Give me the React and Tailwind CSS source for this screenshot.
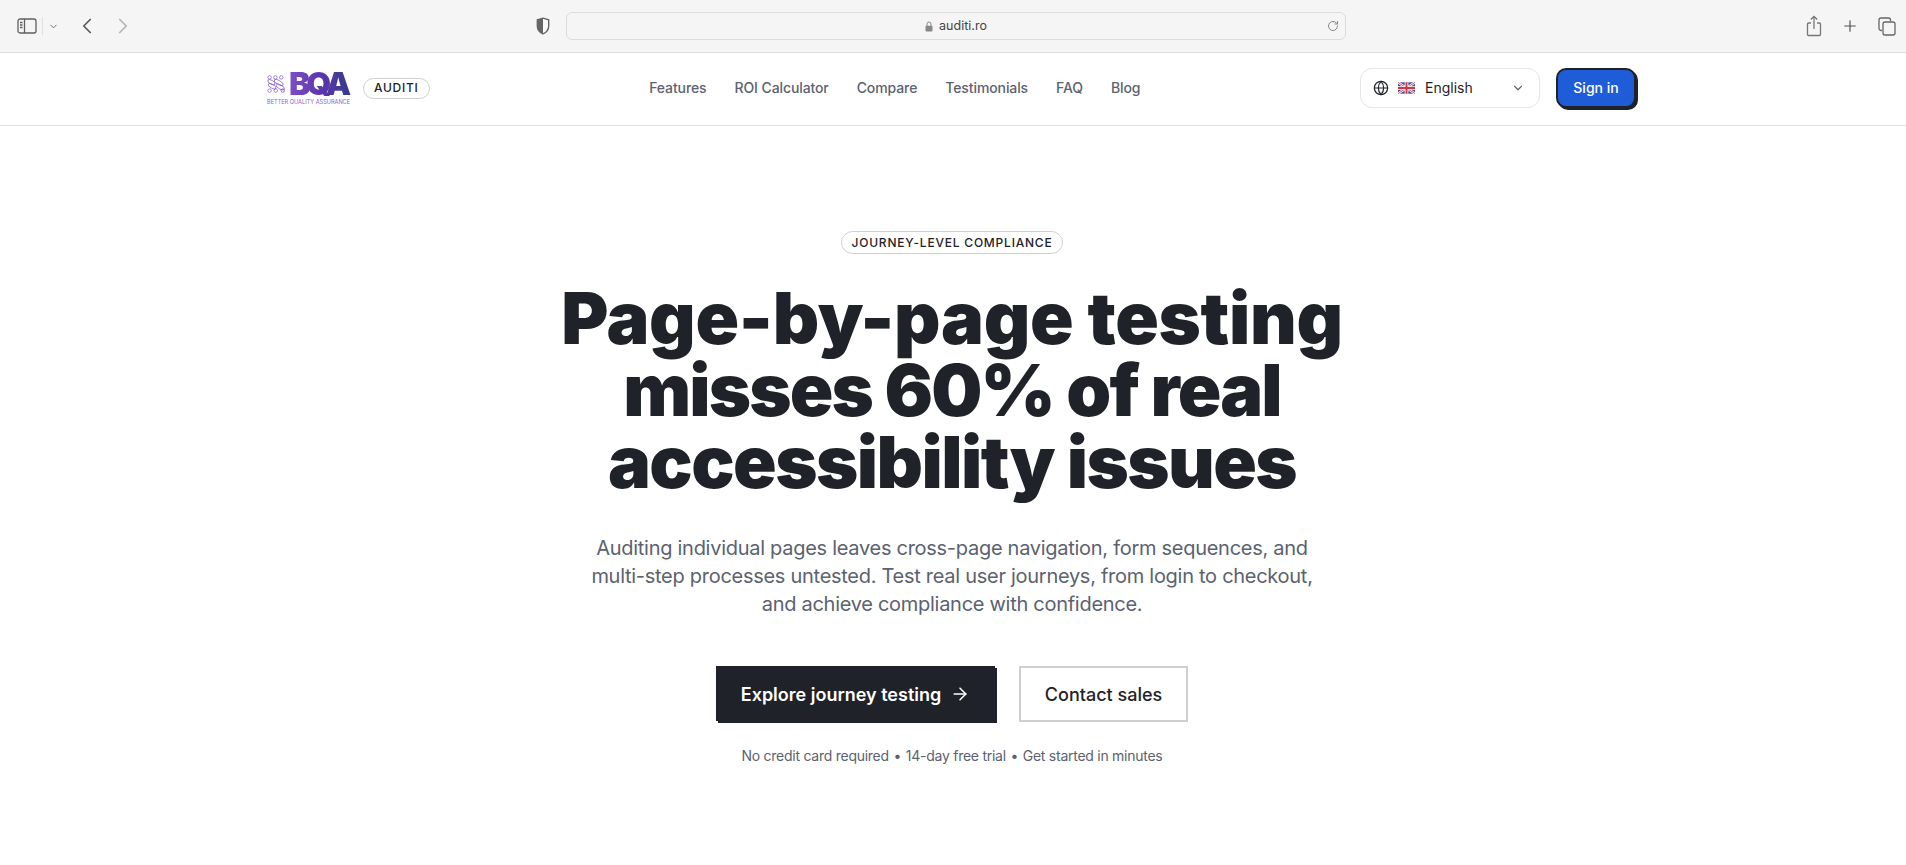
import React from 'react';
import { ArrowRight, ChevronDown, ChevronLeft, ChevronRight, Globe, Plus, RotateCw } from 'lucide-react';

const navLinks = ['Features', 'ROI Calculator', 'Compare', 'Testimonials', 'FAQ', 'Blog'];

const SidebarIcon = () => (
  <svg width="20" height="16" viewBox="0 0 20 16" fill="none" stroke="#5f5f5f" strokeWidth="1.3">
    <rect x="1" y="1" width="18" height="14" rx="2" />
    <path d="M7.5 1v14" />
    <path d="M3 4.5h2.5M3 7h2.5M3 9.5h2.5" />
  </svg>
);

const ShieldIcon = () => (
  <svg width="14" height="18" viewBox="0 0 16 20">
    <path d="M8 1 L14.5 3 V10 C14.5 14 11.5 17.5 8 19 C4.5 17.5 1.5 14 1.5 10 V3 Z" fill="#fff" stroke="#666" strokeWidth="1.6" />
    <path d="M8 1 L1.5 3 V10 C1.5 14 4.5 17.5 8 19 Z" fill="#666" />
  </svg>
);

const LockIcon = () => (
  <svg width="8" height="11" viewBox="0 0 8 11" className="mr-[6px]">
    <path d="M2 5V3a2 2 0 0 1 4 0v2" fill="none" stroke="#888" strokeWidth="1" />
    <rect x="0.5" y="4.8" width="7" height="5.7" rx="1" fill="#888" />
  </svg>
);

const ShareIcon = () => (
  <svg width="16" height="22" viewBox="0 0 16 22" fill="none" stroke="#777" strokeWidth="1.3">
    <path d="M5 8H2.5A1 1 0 0 0 1.5 9v10.5a1 1 0 0 0 1 1h11a1 1 0 0 0 1-1V9a1 1 0 0 0-1-1H11" />
    <path d="M8 14V1.5M4.8 4.5 8 1.3l3.2 3.2" />
  </svg>
);

const TabsIcon = () => (
  <svg width="18" height="19" viewBox="0 0 18 19" fill="none" stroke="#666" strokeWidth="1.3">
    <path d="M4 13.5H3a2 2 0 0 1-2-2V3a2 2 0 0 1 2-2h7.5a2 2 0 0 1 2 2v1" />
    <rect x="5" y="5" width="12" height="13" rx="2" />
  </svg>
);

const UkFlag = () => (
  <svg width="17" height="12" viewBox="0 0 60 40" className="rounded-[1px]">
    <rect width="60" height="40" fill="#3f4f8f" />
    <path d="M0 0l60 40M60 0L0 40" stroke="#fff" strokeWidth="8" />
    <path d="M0 0l60 40M60 0L0 40" stroke="#d8343f" strokeWidth="3" />
    <path d="M30 0v40M0 20h60" stroke="#fff" strokeWidth="13" />
    <path d="M30 0v40M0 20h60" stroke="#d8343f" strokeWidth="7" />
  </svg>
);

const LogoKnot = () => (
  <svg width="26" height="24" viewBox="0 0 26 24" fill="none" stroke="#7a4fc4" strokeWidth="0.9">
    <circle cx="3.5" cy="3" r="2.4" />
    <circle cx="11.5" cy="3" r="2.4" />
    <circle cx="19.5" cy="3" r="2.4" />
    <ellipse cx="6" cy="9.5" rx="5.5" ry="2.6" transform="rotate(30 6 9.5)" />
    <ellipse cx="16" cy="10" rx="7" ry="2.7" transform="rotate(30 16 10)" />
    <ellipse cx="7" cy="15" rx="6" ry="2.6" transform="rotate(30 7 15)" />
    <ellipse cx="18" cy="16" rx="6.5" ry="2.7" transform="rotate(30 18 16)" />
    <circle cx="3.5" cy="21" r="2.4" />
    <circle cx="12" cy="21" r="2.4" />
    <circle cx="21.5" cy="21" r="2.4" stroke="#5a3aa8" />
  </svg>
);

const Logo = () => (
  <div className="flex w-[84px] flex-col">
    <div className="flex h-[24px] items-center">
      <LogoKnot />
      <span className="ml-[3px] bg-gradient-to-r from-[#7c4fc9] via-[#5f35ad] to-[#2f3a8c] bg-clip-text pr-[4px] text-[32px] leading-[24px] font-black tracking-[-0.13em] text-transparent">BQA</span>
    </div>
    <span className="mt-[3px] text-[5.6px] leading-[6px] whitespace-nowrap text-[#8a62cc]">BETTER QUALITY ASSURANCE</span>
  </div>
);

const BrowserBar = () => (
  <div className="flex h-[53px] items-center border-b border-[#dedede] bg-[#f5f5f5]">
    <div className="flex w-[566px] items-center pl-[17px] text-[#666]">
      <SidebarIcon />
      <span className="ml-[5px] h-[18px] w-px bg-[#e0e0e0]" />
      <ChevronDown size={11} className="ml-[5px]" strokeWidth={2} />
      <ChevronLeft size={26} className="ml-[15px] text-[#5a5a5a]" strokeWidth={1.6} />
      <ChevronRight size={26} className="ml-[10px] text-[#b5b5b5]" strokeWidth={1.6} />
      <span className="ml-auto mr-[16px] flex">
        <ShieldIcon />
      </span>
    </div>
    <div className="relative flex h-[28px] w-[780px] items-center justify-center rounded-md border border-[#dcdcdc] bg-[#f5f5f5]">
      <LockIcon />
      <span className="text-[12.5px] text-[#444]">auditi.ro</span>
      <RotateCw size={12} className="absolute right-[6px] text-[#888]" />
    </div>
    <div className="ml-auto flex items-center gap-[19px] pr-[10px]">
      <ShareIcon />
      <Plus size={18} className="text-[#555]" strokeWidth={1.6} />
      <TabsIcon />
    </div>
  </div>
);

const Header = () => (
  <header className="h-[73px] border-b border-[#e2e2e2] bg-white">
    <div className="mx-auto flex h-full max-w-[1400px] items-center justify-between pr-[17px] pb-[2px] pl-[14px]">
      <div className="flex items-center gap-[12px]">
        <Logo />
        <span className="flex h-[21px] items-center rounded-full border border-[#cfcfcf] px-[10px] text-[12px] font-medium tracking-[0.06em] text-[#1f2228]">AUDITI</span>
      </div>
      <nav className="flex items-center gap-[28px] pb-[2px] text-[14px] font-medium tracking-[-0.1px] text-[#5b6270]">
        {navLinks.map(link => <a key={link} href="#">{link}</a>)}
      </nav>
      <div className="flex items-center gap-[16px]">
        <div className="flex h-[40px] w-[180px] items-center rounded-xl border border-[#e6e6e6] pr-[14px] pl-[12px] text-[14px] text-[#1f2228]">
          <Globe size={16} strokeWidth={1.8} />
          <span className="ml-[9px] flex"><UkFlag /></span>
          <span className="ml-[10px] pb-[2px]">English</span>
          <ChevronDown size={14} className="ml-auto text-[#666]" />
        </div>
        <button className="h-[40px] w-[80px] rounded-[10px] border-2 border-[#1f2228] bg-[#1f5cd7] pb-[1px] text-[14px] font-medium text-white shadow-[2px_2px_0_#1f2228]">Sign in</button>
      </div>
    </div>
  </header>
);

const Hero = () => (
  <main className="flex flex-col items-center bg-white pt-[105px] pr-[2px]">
    <span className="flex h-[23px] items-center rounded-full border border-[#cfcfcf] px-[10px] text-[12px] font-medium tracking-[0.065em] text-[#1f2228]">JOURNEY-LEVEL COMPLIANCE</span>
    <h1 className="mt-[28px] text-center text-[72px] leading-[72px] font-black text-[#1f2228]">
      <span className="block tracking-[-0.3px]">Page-by-page testing</span>
      <span className="block tracking-[-1.85px]">misses 60% of real</span>
      <span className="block tracking-[-1.55px]">accessibility issues</span>
    </h1>
    <p className="mt-[36px] text-center text-[20px] leading-[28px] tracking-[-0.28px] text-[#5b6270]">
      Auditing individual pages leaves cross-page navigation, form sequences, and<br />
      multi-step processes untested. Test real user journeys, from login to checkout,<br />
      and achieve compliance with confidence.
    </p>
    <div className="mt-[48px] flex items-start gap-[22px]">
      <button className="mr-[2px] mb-[2px] flex h-[55px] w-[279px] items-center justify-center gap-[9px] bg-[#1f2228] pt-[1px] text-[18px] font-semibold text-white shadow-[2px_2px_0_#1f2228]">
        Explore journey testing
        <ArrowRight size={20} strokeWidth={1.8} />
      </button>
      <button className="h-[56px] w-[169px] border-2 border-[#cfcfcf] bg-white text-[18px] font-medium text-[#1f2228]">Contact sales</button>
    </div>
    <p className="mt-[23px] text-[14px] leading-[20px] tracking-[-0.26px] text-[#5b6270]">
      No credit card required <span className="mx-[1px]">•</span> 14-day free trial <span className="mx-[1px]">•</span> Get started in minutes
    </p>
  </main>
);

export default function App() {
  return (
    <div className="min-h-screen bg-white font-['Inter',sans-serif]">
      <BrowserBar />
      <Header />
      <Hero />
    </div>
  );
}
